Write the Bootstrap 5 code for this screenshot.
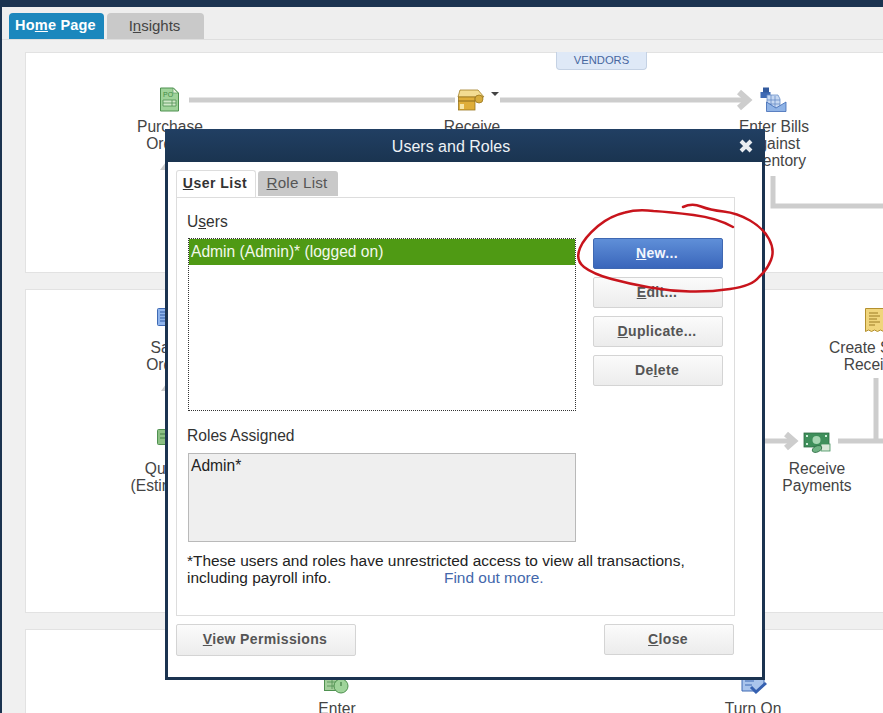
<!DOCTYPE html>
<html lang="en">
<head>
<meta charset="utf-8">
<title>Users and Roles</title>
<link href="https://cdn.jsdelivr.net/npm/bootstrap@5.3.0/dist/css/bootstrap.min.css" rel="stylesheet">
<style>
html,body{height:713px;overflow:hidden;margin:0}
body{font-family:"Liberation Sans",Arial,sans-serif;font-size:15.6px;color:#444;background:#f0f0f0}
.app-shell{position:relative;width:883px;height:713px;overflow:hidden;border-top:7px solid #1b3350;border-left:2px solid #1b3350}
.main-tabs{height:33px;background:#eee;border-bottom:1px solid #dedede;padding:6px 0 0 7px;gap:3px;flex-wrap:nowrap}
.main-tabs .nav-link{height:26px;padding:0 2px 0 0;border:0;border-radius:4px 4px 0 0;font-size:15px;line-height:25px;text-align:center;background:#c9c9c9;color:#444}
.main-tabs .nav-link.active{background:#1b87bd;color:#fff;font-weight:700;font-size:14.5px;letter-spacing:.2px;width:95px}
.main-tabs .tab-insights{width:97px}
.work-area{padding:12px 0 0 23px;gap:16px}
.flow-panel{position:relative;background:#fff;border:1px solid #e2e2e2;border-right:0;flex:none}
.p-one{height:221px}.p-two{height:324px}.p-three{height:90px}
.flow-svg{position:absolute;left:-1px;top:-1px;width:858px;height:400px;overflow:visible}
.flow-label{position:absolute;width:130px;text-align:center;line-height:17px;font-size:15.6px;color:#444}
.vendors-tag{position:absolute;left:530px;top:-1px;width:91px;height:18px;background:#dfe9f7;border:1px solid #c5d2e4;border-top:0;border-radius:0 0 4px 4px;color:#47679f;font-size:11.2px;line-height:16px;text-align:center}
.roles-dialog{position:absolute;left:163px;top:122px;width:600px;height:551px;background:#fff;border:3px solid #1b3350;border-top:0;border-radius:0;box-shadow:none}
.dialog-title{height:33px;margin:0 -3px;background:linear-gradient(#213f63,#1a3450);color:#eef2f6;font-size:16px;padding:0 28px 0 0;position:relative;border:0;border-radius:0;line-height:35px;text-align:center}
.dialog-x{position:absolute;left:572px;top:8px;width:18px;height:18px}
.dialog-tabs{padding:9px 0 0 8px;gap:2px;border:0;flex-wrap:nowrap;height:35px}
.dialog-tabs .nav-link{height:25px;padding:0 2px 0 0;border:0;border-radius:3px 3px 0 0;background:#c9c9c9;color:#555;width:80px;text-align:center;line-height:24px;font-size:15.2px;letter-spacing:.2px;margin:0}
.dialog-tabs .nav-link.active{background:#fff;color:#333;font-weight:700;height:27px;margin-top:-1px;border:1px solid #ddd;border-bottom:0;position:relative;z-index:2;font-size:14px;letter-spacing:.5px}
.tab-body{margin:0 27px 0 8px;height:419px;border:1px solid #ddd;padding:15px 10px 0 10px;color:#222;position:relative}
.field-label{font-size:15.6px;line-height:18px;color:#333;margin:0}
.users-row{gap:17px;margin-top:7px;align-items:flex-start}
.users-list{width:388px;height:173px;margin-left:1px;border:1px dotted #333;border-radius:0;background:#fff;display:block}
.users-list .list-group-item{background:#4f9a14;border:0;border-radius:0;color:#f3f8ec;padding:0 2px;height:26px;line-height:25px;font-size:15.6px}
.side-btns{gap:8px;width:130px}
.qb-btn{display:block;height:31px;padding:0 2px 2px 0;border:1px solid #d4d4d4;border-radius:2px;background:linear-gradient(#fbfbfb,#ececec);color:#555;font-weight:700;font-size:14px;letter-spacing:.35px;line-height:24px;text-align:center;width:130px;--bs-btn-hover-bg:#eee}
.qb-btn.is-primary{background:linear-gradient(#5f8fd8,#3a66bb);border-color:#3f68b2;color:#f2f6fd}
.roles-label{margin-top:16px}
.roles-box{width:388px;height:89px;margin:8px 0 0 1px;border:1px solid #b9b9b9;background:#efefef;padding:3px 2px;font-size:15.6px;line-height:18px;color:#222}
.note-text{margin:10px 0 0;line-height:17px;font-size:15.45px;color:#222;position:relative}
.note-text a{position:absolute;left:257px;top:17px;color:#4367ab;text-decoration:none}
.dialog-foot{margin:8px 28px 0 8px;height:32px}
.qb-btn.wide-btn{width:180px;height:32px}
.scribble{position:absolute;left:-2px;top:-7px;width:883px;height:713px;pointer-events:none}
</style>
</head>
<body>
<div class="app-shell">
  <ul class="nav main-tabs">
    <li class="nav-item"><a class="nav-link active" href="#">Ho<u>m</u>e Page</a></li>
    <li class="nav-item"><a class="nav-link tab-insights" href="#">I<u>n</u>sights</a></li>
  </ul>
  <div class="d-flex flex-column work-area">
    <section class="flow-panel p-one">
      <svg class="flow-svg" viewBox="25 52 858 400">
        <g fill="none" stroke="#cdcdcd" stroke-width="5">
          <path d="M189 100H455"/>
          <path d="M500 100H748"/>
          <path d="M739 92l9 8-9 8" stroke-width="6"/>
          <path d="M773 176V206H883"/>
        </g>
        <path d="M491 92h8l-4 4z" fill="#444"/>
        <path d="M160 170l6-8v8z" fill="#cdcdcd"/>
        <!-- PO doc -->
        <path d="M160.500 88h13l5 5v18h-18z" fill="#9fd39a" stroke="#4f9150"/>
        <path d="M173 88v5h5z" fill="#e7f3df" stroke="#4f9150" stroke-width=".6"/>
        <path d="M163 100h13v6h-13zM163 103h13M172 100v6" fill="#cfe8c8" stroke="#4f9150" stroke-width=".8"/>
        <text x="163" y="97" font-size="7" fill="#3f8a44" font-family="Liberation Sans">PO</text>
        <!-- Receive box -->
        <path d="M460 90h18l6 7h-26z" fill="#f3dc92" stroke="#a17f26" stroke-width=".8"/>
        <rect x="458.500" y="97" width="16.500" height="13" fill="#dfae3a" stroke="#9a7720" stroke-width=".8"/>
        <path d="M458 101h17" stroke="#8a6a1c"/>
        <rect x="460" y="104" width="4" height="5" fill="#f6e6a8"/>
        <circle cx="479" cy="99" r="4" fill="#d7ac3d" stroke="#9a7720" stroke-width=".8"/>
        <!-- Enter bills -->
        <rect x="760.500" y="92" width="10" height="6" fill="#3f6ab4"/><rect x="763" y="87.500" width="6" height="5" fill="#335a9e"/>
        <path d="M767 95h11l2 4v10h-13z" fill="#c6d8f2" stroke="#6a8fc8" stroke-width=".8"/>
        <path d="M771 95v14M775 96v13M767 100h13M767 104h13" stroke="#5d84c2" stroke-width=".7"/>
        <path d="M766.500 102v9.500h19.500v-9.500l-10 6z" fill="#8fb3e6" stroke="#3f6ab4" stroke-width=".8"/>
      </svg>
      <div class="vendors-tag">VENDORS</div>
      <div class="flow-label" style="left:79px;top:65px">Purchase<br>Orders</div>
      <div class="flow-label" style="left:381px;top:65px">Receive</div>
      <div class="flow-label" style="left:683px;top:65px">Enter Bills<br>Against<br>Inventory</div>
    </section>
    <section class="flow-panel p-two">
      <svg class="flow-svg" viewBox="25 289 858 400">
        <g fill="none" stroke="#cdcdcd" stroke-width="5">
          <path d="M760 441H793"/>
          <path d="M786 434l8 7-8 7" stroke-width="6"/>
          <path d="M838 441H883M876 378V441"/>
        </g>
        <path d="M161 391l5-7v7z" fill="#cdcdcd"/>
        <rect x="157.500" y="308.500" width="12" height="17" rx="1" fill="#8fb4ec" stroke="#3f6ab4"/>
        <path d="M160 312h8M160 315h8M160 318h8M160 321h8" stroke="#2f5aa6"/>
        <rect x="157.500" y="429.500" width="12" height="15" rx="1" fill="#8cc084" stroke="#4f9150"/>
        <path d="M160 434h8M160 438h8" stroke="#3f7a40"/>
        <!-- receipts -->
        <path d="M865.500 308.500h18v23l-3-1.500-3 1.500-3-1.500-3 1.500-3-1.500-3 1.500z" fill="#f0d57c" stroke="#b4902e"/>
        <path d="M869 313h9M869 316h11M869 319h8M869 322h11M869 325h6" stroke="#9c7c25"/>
        <!-- money -->
        <rect x="804" y="433" width="25" height="14" fill="#3f8f5b" stroke="#2e6d44" stroke-width=".8"/>
        <circle cx="816.500" cy="440" r="4" fill="#a6d6b2"/>
        <path d="M806 435h2v2h-2zM825 435h2v2h-2zM806 443h2v2h-2z" fill="#cfeeda"/>
        <rect x="821" y="444" width="9" height="7" fill="#d8e8d8" stroke="#3f8f5b" stroke-width=".8"/>
        <ellipse cx="817" cy="449" rx="5" ry="3" fill="#6fb283" stroke="#2e6d44" stroke-width=".8" transform="rotate(-25 817 449)"/>
      </svg>
      <div class="flow-label" style="left:79px;top:49px">Sales<br>Orders</div>
      <div class="flow-label" style="left:79px;top:170px">Quotes<br>(Estimates)</div>
      <div class="flow-label" style="left:726px;top:170px">Receive<br>Payments</div>
      <div class="flow-label" style="left:783px;top:49px">Create Sales<br>Receipts</div>
    </section>
    <section class="flow-panel p-three">
      <svg class="flow-svg" viewBox="25 629 858 400">
        <rect x="324.500" y="675.500" width="15" height="15" fill="#a4cf9c" stroke="#4f9150"/>
        <path d="M327 682h10M327 686h10M332 680v9" stroke="#4f9150" stroke-width=".8"/>
        <circle cx="341" cy="686" r="7" fill="#9fd49a" stroke="#4f9150"/>
        <path d="M341 682v4" stroke="#2f6b32"/>
        <path d="M742 676h22v8l-8 7h-14z" fill="#a9c4ec" stroke="#3f6ab4"/>
        <path d="M745 681h9M745 685h7" stroke="#3f6ab4"/>
        <path d="M751 687l5 5 10-9" fill="none" stroke="#3560b0" stroke-width="3"/>
      </svg>
      <div class="flow-label" style="left:246px;top:70px">Enter</div>
      <div class="flow-label" style="left:662px;top:70px">Turn On</div>
    </section>
  </div>

  <div class="modal-content roles-dialog" role="dialog">
    <div class="dialog-title">Users and Roles
      <svg class="dialog-x" viewBox="0 0 18 18"><path d="M4 4l10 10M14 4L4 14" stroke="#e9edf1" stroke-width="4"/></svg>
    </div>
    <ul class="nav dialog-tabs">
      <li class="nav-item"><a class="nav-link active" href="#"><u>U</u>ser List</a></li>
      <li class="nav-item"><a class="nav-link" href="#"><u>R</u>ole List</a></li>
    </ul>
    <div class="tab-body">
      <p class="field-label">U<u>s</u>ers</p>
      <div class="d-flex users-row">
        <ul class="list-group users-list">
          <li class="list-group-item active">Admin (Admin)* (logged on)</li>
        </ul>
        <div class="d-flex flex-column side-btns">
          <button type="button" class="btn qb-btn is-primary"><u>N</u>ew...</button>
          <button type="button" class="btn qb-btn"><u>E</u>dit...</button>
          <button type="button" class="btn qb-btn"><u>D</u>uplicate...</button>
          <button type="button" class="btn qb-btn">De<u>l</u>ete</button>
        </div>
      </div>
      <p class="field-label roles-label">Roles Assigned</p>
      <div class="roles-box">Admin*</div>
      <p class="note-text">*These users and roles have unrestricted access to view all transactions,<br>including payroll info.<a href="#">Find out more.</a></p>
    </div>
    <div class="d-flex justify-content-between dialog-foot">
      <button type="button" class="btn qb-btn wide-btn"><u>V</u>iew Permissions</button>
      <button type="button" class="btn qb-btn"><u>C</u>lose</button>
    </div>
  </div>

  <svg class="scribble" viewBox="0 0 883 713">
    <path d="M733 227Q717 218 693.500 215Q670 212 653.500 211Q637 209 625 212.500Q610 216 598 226Q584 238 580 248Q575 260 584 267Q593 274 611.500 279Q630 284 650 287.500Q670 291 690 291.500Q710 292 730 289Q752 286 759 277Q767 270 771 260Q775 250 769 239Q763 228 750 220.500Q737 213 723.500 211.500Q710 210 701 206.500Q692 203 683 207" fill="none" stroke="#c8141c" stroke-width="2.500" stroke-linecap="round"/>
  </svg>
</div>
</body>
</html>
